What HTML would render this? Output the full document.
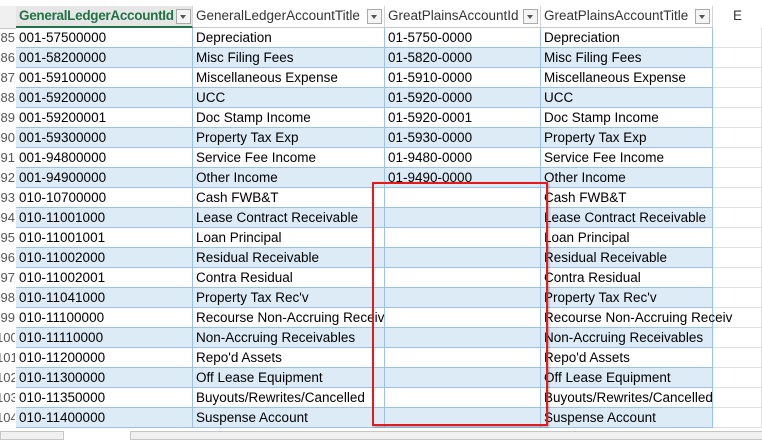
<!DOCTYPE html><html><head><style>
body{margin:0;width:762px;height:438px;overflow:hidden;background:#fff;font-family:"Liberation Sans",sans-serif;position:relative}
.c{position:absolute;height:20px;line-height:20px;font-size:13.5px;color:#000;white-space:nowrap;overflow:hidden;box-sizing:border-box;padding-left:3px;letter-spacing:0px}
.h{position:absolute;top:6px;height:22px;line-height:20px;font-size:13.5px;color:#333;box-sizing:border-box;padding-left:3px;background:#fff;border-right:1px solid #d4d4d4;border-bottom:1px solid #c6c6c6;white-space:nowrap;overflow:hidden}
.dd{position:absolute;top:3px;width:13px;height:13px;border:1px solid #aaa;background:#f4f4f4}
.dd:after{content:"";position:absolute;left:3px;top:5px;border-left:3.5px solid transparent;border-right:3.5px solid transparent;border-top:4px solid #555}
.rn{position:absolute;left:-4px;width:19px;height:20px;line-height:20px;font-size:13px;color:#555;overflow:hidden;text-align:right}
</style></head><body>
<div style="position:absolute;left:0;top:6px;width:16px;height:22px;background:#f0f0f0;border-bottom:1px solid #c6c6c6"></div>
<div class="h" style="left:16px;width:177px;color:#217346;font-weight:bold;border-bottom:2px solid #217346;background:#e6e6e6;letter-spacing:-0.3px">GeneralLedgerAccountId<div class="dd" style="left:160px"></div></div>
<div class="h" style="left:193px;width:192px">GeneralLedgerAccountTitle<div class="dd" style="left:174px"></div></div>
<div class="h" style="left:385px;width:156px">GreatPlainsAccountId<div class="dd" style="left:138px"></div></div>
<div class="h" style="left:541px;width:172px">GreatPlainsAccountTitle<div class="dd" style="left:154px"></div></div>
<div class="h" style="left:713px;width:49px;text-align:center;padding:0;border:none">E</div>
<div id="rows"></div>
<script>
var d=[["001-57500000","Depreciation","01-5750-0000","Depreciation"],["001-58200000","Misc Filing Fees","01-5820-0000","Misc Filing Fees"],["001-59100000","Miscellaneous Expense","01-5910-0000","Miscellaneous Expense"],["001-59200000","UCC","01-5920-0000","UCC"],["001-59200001","Doc Stamp Income","01-5920-0001","Doc Stamp Income"],["001-59300000","Property Tax Exp","01-5930-0000","Property Tax Exp"],["001-94800000","Service Fee Income","01-9480-0000","Service Fee Income"],["001-94900000","Other Income","01-9490-0000","Other Income"],["010-10700000","Cash FWB&T","","Cash FWB&T"],["010-11001000","Lease Contract Receivable","","Lease Contract Receivable"],["010-11001001","Loan Principal","","Loan Principal"],["010-11002000","Residual Receivable","","Residual Receivable"],["010-11002001","Contra Residual","","Contra Residual"],["010-11041000","Property Tax Rec'v","","Property Tax Rec'v"],["010-11100000","Recourse Non-Accruing Receivable","","Recourse Non-Accruing Receiv"],["010-11110000","Non-Accruing Receivables","","Non-Accruing Receivables"],["010-11200000","Repo'd Assets","","Repo'd Assets"],["010-11300000","Off Lease Equipment","","Off Lease Equipment"],["010-11350000","Buyouts/Rewrites/Cancelled","","Buyouts/Rewrites/Cancelled"],["010-11400000","Suspense Account","","Suspense Account"]];
var L=[16,193,385,541],W=[177,192,156,172],h="";
d.forEach(function(r,i){var y=28+i*20,bg=i%2?"#ddebf7":"#fff";
h+='<div class="rn" style="top:'+y+'px">'+(85+i)+'</div>';
h+='<div class="c" style="left:713px;top:'+y+'px;width:49px;border-right:1px solid #e0e0e0;border-bottom:1px solid #e0e0e0"></div>';
for(var j=0;j<4;j++)h+='<div class="c" style="left:'+L[j]+'px;top:'+y+'px;width:'+W[j]+'px;background:'+bg+';border-right:1px solid #9bc2e6;border-bottom:1px solid #9bc2e6'+(j==3?';overflow:visible':'')+'">'+r[j].replace(/&/g,"&amp;")+'</div>';
});
document.getElementById("rows").innerHTML=h;
</script>
<div style="position:absolute;left:0;top:428px;width:762px;height:10px;background:#fff"></div>
<div style="position:absolute;left:0;top:431px;width:62px;height:7px;border:1px solid #c6c6c6;background:#f0f0f0"></div>
<div style="position:absolute;left:130px;top:431px;width:632px;height:7px;border:1px solid #c6c6c6;background:#f0f0f0"></div>
<div style="position:absolute;left:372px;top:182px;width:172px;height:240px;border:2px solid #e41b1b;box-shadow:1px 1px 2px rgba(0,0,0,.3)"></div>
</body></html>
